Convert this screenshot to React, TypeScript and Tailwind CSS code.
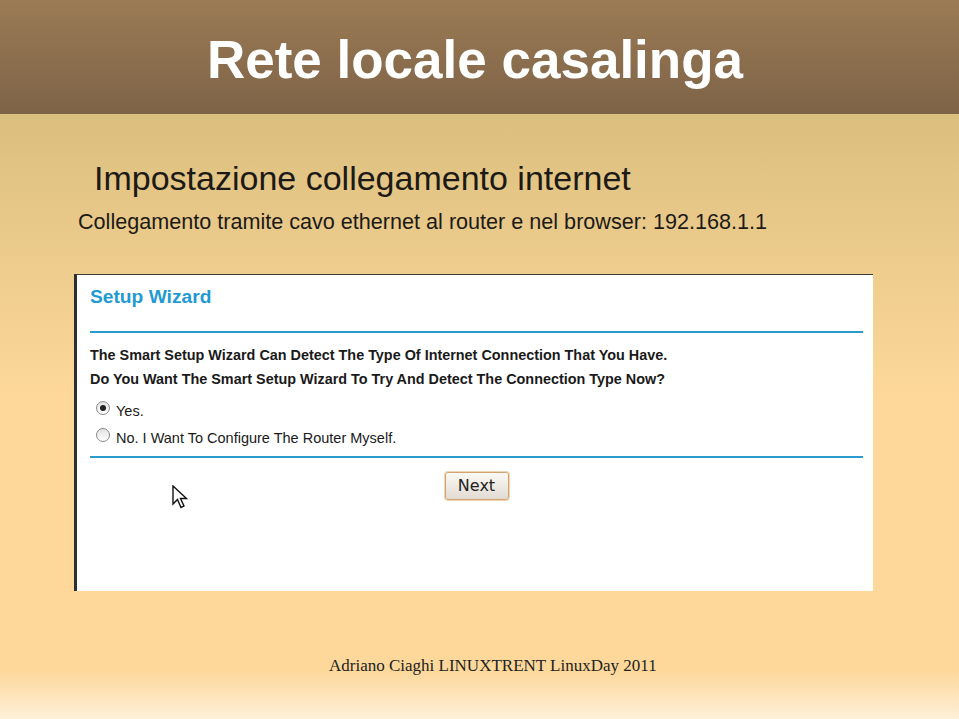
const Radio = ({ checked }: { checked?: boolean }) => (
  <span className="flex h-[14px] w-[14px] shrink-0 items-center justify-center rounded-full border border-[#8a8a8a] bg-gradient-to-b from-[#e2e2e2] to-white">
    {checked && <span className="h-[6px] w-[6px] rounded-full bg-[#222]" />}
  </span>
);

const Cursor = () => (
  <svg width="17" height="25" viewBox="0 0 17 25" className="block">
    <path
      d="M1 1 L1 19 L5.5 14.5 L9 22.5 L12 21 L8.5 13.5 L14.5 13.5 Z"
      fill="#fff"
      stroke="#111"
      strokeWidth="1.4"
      strokeLinejoin="miter"
    />
  </svg>
);

const SetupWizard = () => (
  <div className="ml-[74px] h-[317px] w-[799px] border-t border-l-[3px] border-t-[#3a3a3a] border-l-[#2e2e2e] bg-white pl-[13px] pr-[10px] font-['Liberation_Sans',Arial,sans-serif]">
    <div className="mt-[12px] text-[19.2px] font-bold leading-[19px] text-[#1f9ad3]">
      Setup Wizard
    </div>
    <div className="mt-[25px] h-[2px] bg-[#2b9bcf]" />
    <div className="mt-[14px] text-[14.4px] font-bold leading-[16px] text-[#1a1a1a]">
      The Smart Setup Wizard Can Detect The Type Of Internet Connection That You Have.
    </div>
    <div className="mt-[8px] text-[14.4px] font-bold leading-[16px] text-[#1a1a1a]">
      Do You Want The Smart Setup Wizard To Try And Detect The Connection Type Now?
    </div>
    <div className="mt-[14px] flex items-start gap-[6px] pl-[6px] text-[14.5px] leading-[16px] text-[#1a1a1a]">
      <Radio checked />
      <span className="mt-[2px]">Yes.</span>
    </div>
    <div className="mt-[9px] flex items-start gap-[6px] pl-[6px] text-[14.5px] leading-[16px] text-[#1a1a1a]">
      <Radio />
      <span className="mt-[2px]">No. I Want To Configure The Router Myself.</span>
    </div>
    <div className="mt-[10px] h-[2px] bg-[#2b9bcf]" />
    <div className="relative mt-[14px] flex justify-center">
      <button className="h-[28px] w-[64px] rounded-[3px] border border-[#d1a46f] bg-gradient-to-b from-[#fbf9f5] to-[#e2dbd2] font-['DejaVu_Sans',sans-serif] text-[16px] text-[#222] shadow-[0_0_0_1px_#efd5b4]">
        Next
      </button>
      <div className="absolute left-[82px] top-[13px]">
        <Cursor />
      </div>
    </div>
  </div>
);

export default function App() {
  return (
    <div className="flex h-[719px] w-[959px] flex-col overflow-hidden">
      <div className="h-[114px] bg-gradient-to-b from-[#9b7b55] to-[#7e6347] pr-[9px] pt-[33px] text-center font-['Liberation_Sans',Arial,sans-serif] text-[53px] font-bold leading-[53px] text-white">
        Rete locale casalinga
      </div>
      <div className="flex flex-1 flex-col bg-[linear-gradient(to_bottom,#dbbf7e_0%,#fdd89a_47%,#fdd89a_92%,#fef0d8_100%)] font-['Liberation_Sans',Arial,sans-serif] text-[#1c1a16]">
        <div className="ml-[94px] mt-[47px] text-[34px] leading-[34px]">
          Impostazione collegamento internet
        </div>
        <div className="ml-[78px] mt-[16px] text-[21.6px] leading-[21.5px]">
          Collegamento tramite cavo ethernet al router e nel browser: 192.168.1.1
        </div>
        <div className="mt-[41px]">
          <SetupWizard />
        </div>
        <div className="ml-[329px] mt-[66px] font-['Liberation_Serif','Times_New_Roman',serif] text-[17px] leading-[17px] text-[#222]">
          Adriano Ciaghi LINUXTRENT LinuxDay 2011
        </div>
      </div>
    </div>
  );
}
